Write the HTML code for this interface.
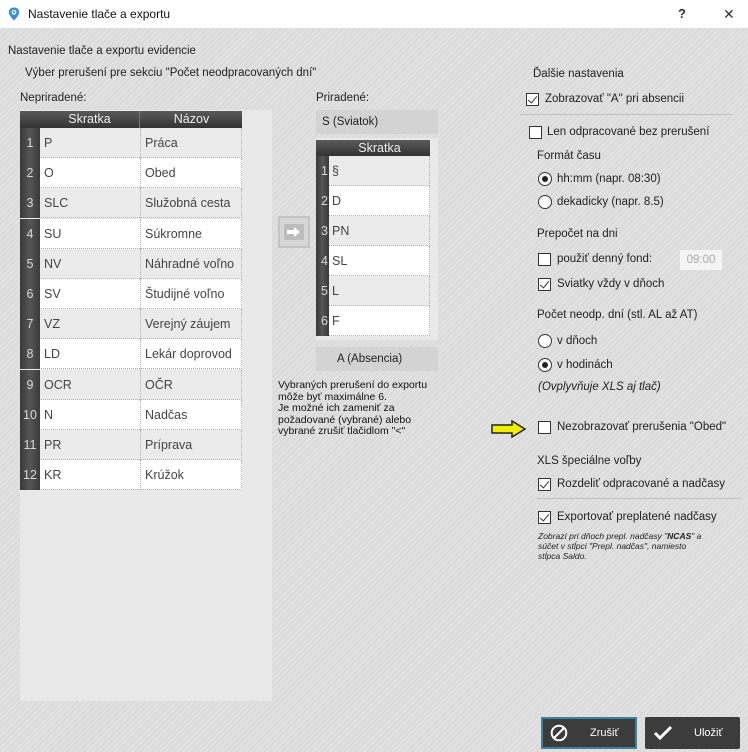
<!DOCTYPE html>
<html><head><meta charset="utf-8"><style>
*{margin:0;padding:0;box-sizing:border-box}
body{width:748px;height:752px;overflow:hidden;position:relative;font-family:"Liberation Sans","DejaVu Sans",sans-serif;font-size:11.5px;color:#222;
background:repeating-linear-gradient(135deg,#e2e2e2 0 2px,#dadada 2px 4px);}
.a{position:absolute;white-space:nowrap}
.title{left:0;top:0;width:748px;height:28px;background:#fff}
.panel{background:#e9e9e9}
.tbl{position:absolute}
.row{position:absolute;left:0;height:30px;border-bottom:1px dotted #b0b0b0;font-size:12.5px;color:#444}
.num{position:absolute;left:0;top:0;height:30px;background:linear-gradient(90deg,#3a3a3a,#555 50%,#3a3a3a);color:#d8d8d8;font-size:12.5px;line-height:30px;text-align:center}
.hdr{position:absolute;background:linear-gradient(#5a5a5a,#333);color:#eee;font-size:12.5px;line-height:16px;text-align:center}
.cb{position:absolute;width:13px;height:13px;border:1px solid #333;background:#fff}
.cb.on::after{content:"";position:absolute;left:3px;top:0px;width:4px;height:8px;border:solid #333;border-width:0 1.5px 1.5px 0;transform:rotate(40deg)}
.rb{position:absolute;width:14px;height:14px;border:1px solid #333;border-radius:50%;background:#fff}
.rb.on::after{content:"";position:absolute;left:3px;top:3px;width:6px;height:6px;border-radius:50%;background:#222}
.box{position:absolute;background:#d3d3d3;font-size:11.5px;line-height:24px;padding-left:6px}
</style></head><body>
<div class="a title"></div>
<svg class="a" style="left:8px;top:7px" width="12" height="14" viewBox="0 0 12 14"><path d="M6 0.5C2.8 0.5 0.8 2.6 0.8 5.3 0.8 8.7 6 13.5 6 13.5S11.2 8.7 11.2 5.3C11.2 2.6 9.2 0.5 6 0.5Z" fill="#3a8fd0"/><circle cx="6" cy="5.3" r="2.4" fill="#fff"/><circle cx="6" cy="5.3" r="1.2" fill="#3a8fd0"/></svg>
<div class="a" style="left:28px;top:7px;font-size:12px;color:#111">Nastavenie tlače a exportu</div>
<div class="a" style="left:678px;top:6px;font-size:13px;font-weight:bold;color:#333">?</div>
<div class="a" style="left:723px;top:6px;font-size:14px;color:#333">✕</div>

<div class="a" style="left:8px;top:45px">Nastavenie tlače a exportu evidencie</div>
<div class="a" style="left:25px;top:67px">Výber prerušení pre sekciu "Počet neodpracovaných dní"</div>
<div class="a" style="left:20px;top:92px">Nepriradené:</div>

<div class="a panel" style="left:20px;top:110px;width:252px;height:591px"></div>
<div class="tbl" style="left:20px;top:111px;width:222px">
<div class="hdr" style="left:0;top:0;width:222px;height:17px"></div>
<div class="hdr" style="left:20px;top:0;width:100px;height:17px;border-right:1px solid #777">Skratka</div>
<div class="hdr" style="left:121px;top:0;width:101px;height:17px">Názov</div>
<div id="lt"></div>
</div>

<div class="a" style="left:316px;top:92px">Priradené:</div>
<div class="box" style="left:316px;top:110px;width:122px">S (Sviatok)</div>
<div class="a panel" style="left:316px;top:138px;width:122px;height:202px"></div>
<div class="tbl" style="left:316px;top:140px;width:114px">
<div class="hdr" style="left:0;top:0;width:114px;height:16px"></div>
<div class="hdr" style="left:13px;top:0;width:101px;height:16px">Skratka</div>
<div id="rt"></div>
</div>
<div class="a" style="left:278px;top:216px;width:32px;height:32px;background:#d6d6d6;border:2px solid #c4c4c4"></div>
<svg class="a" style="left:284px;top:224px" width="20" height="16" viewBox="0 0 20 16"><rect x="0" y="0" width="20" height="16" fill="#bdbdbd"/><path d="M3 6h7V3l6 5-6 5v-3H3z" fill="#fff"/></svg>
<div class="box" style="left:316px;top:347px;width:122px;padding-left:21px">A (Absencia)</div>
<div class="a" style="left:278px;top:380px;font-size:10.5px;line-height:11.5px;color:#111">Vybraných prerušení do exportu<br>môže byť maximálne 6.<br>Je možné ich zameniť za<br>požadované (vybrané) alebo<br>vybrané zrušiť tlačidlom "&lt;"</div>

<div class="a" style="left:533px;top:68px">Ďalšie nastavenia</div>
<div class="cb on" style="left:526px;top:93px"></div><div class="a" style="left:545px;top:93px">Zobrazovať "A" pri absencii</div>
<div class="a" style="left:520px;top:114px;width:212px;height:1px;background:#c0c0c0"></div>
<div class="cb" style="left:529px;top:126px"></div><div class="a" style="left:547px;top:126px">Len odpracované bez prerušení</div>
<div class="a" style="left:537px;top:150px">Formát času</div>
<div class="rb on" style="left:538px;top:172px"></div><div class="a" style="left:557px;top:173px">hh:mm (napr. 08:30)</div>
<div class="rb" style="left:538px;top:195px"></div><div class="a" style="left:557px;top:196px">dekadicky (napr. 8.5)</div>
<div class="a" style="left:537px;top:228px">Prepočet na dni</div>
<div class="cb" style="left:538px;top:253px"></div><div class="a" style="left:557px;top:253px">použiť denný fond:</div>
<div class="a" style="left:680px;top:250px;width:42px;height:20px;background:#f4f4f4;color:#aaa;line-height:20px;text-align:center">09:00</div>
<div class="cb on" style="left:538px;top:278px"></div><div class="a" style="left:557px;top:278px">Sviatky vždy v dňoch</div>
<div class="a" style="left:537px;top:309px">Počet neodp. dní  (stl. AL až AT)</div>
<div class="rb" style="left:538px;top:334px"></div><div class="a" style="left:557px;top:335px">v dňoch</div>
<div class="rb on" style="left:538px;top:358px"></div><div class="a" style="left:557px;top:359px">v hodinách</div>
<div class="a" style="left:538px;top:381px;font-style:italic">(Ovplyvňuje XLS aj tlač)</div>
<svg class="a" style="left:491px;top:420px" width="36" height="18" viewBox="0 0 36 18"><path d="M1 5h20V1l13 8-13 8v-4H1z" fill="#f2ef00" stroke="#222" stroke-width="1.5"/></svg>
<div class="cb" style="left:538px;top:421px"></div><div class="a" style="left:557px;top:421px">Nezobrazovať prerušenia "Obed"</div>
<div class="a" style="left:537px;top:455px">XLS špeciálne voľby</div>
<div class="cb on" style="left:538px;top:478px"></div><div class="a" style="left:557px;top:478px">Rozdeliť odpracované a nadčasy</div>
<div class="a" style="left:537px;top:498px;width:204px;height:1px;background:#c0c0c0"></div>
<div class="cb on" style="left:538px;top:511px"></div><div class="a" style="left:557px;top:511px">Exportovať preplatené nadčasy</div>
<div class="a" style="left:538px;top:531px;font-style:italic;font-size:8.5px;line-height:10px;color:#222">Zobrazí pri dňoch prepl. nadčasy "<b>NCAS</b>" a<br>súčet v stĺpci "Prepl. nadčas", namiesto<br>stĺpca Saldo.</div>

<div class="a" style="left:541px;top:717px;width:96px;height:32px;background:#3c3c3c;border:2px solid #3f7fa0"></div>
<svg class="a" style="left:550px;top:724px" width="18" height="18" viewBox="0 0 18 18"><circle cx="9" cy="9" r="7.3" fill="none" stroke="#fff" stroke-width="2"/><path d="M4 14L14 4" stroke="#fff" stroke-width="2"/></svg>
<div class="a" style="left:590px;top:727px;color:#fff;font-size:11px">Zrušiť</div>
<div class="a" style="left:645px;top:717px;width:95px;height:32px;background:#3c3c3c;border-radius:2px"></div>
<svg class="a" style="left:653px;top:725px" width="20" height="16" viewBox="0 0 20 16"><path d="M2 8l5 5L18 2" fill="none" stroke="#fff" stroke-width="3"/></svg>
<div class="a" style="left:694px;top:727px;color:#fff;font-size:11px">Uložiť</div>

<script>
var L=[["P","Práca"],["O","Obed"],["SLC","Služobná cesta"],["SU","Súkromne"],["NV","Náhradné voľno"],["SV","Študijné voľno"],["VZ","Verejný záujem"],["LD","Lekár doprovod"],["OCR","OČR"],["N","Nadčas"],["PR","Príprava"],["KR","Krúžok"]];
var h="";L.forEach(function(r,i){var y=17+i*30.2;var bg=i%2?"#fff":"#ebebeb";
h+='<div class="row" style="top:'+y+'px;width:222px;background:'+bg+'"><div class="num" style="width:20px">'+(i+1)+'</div><div style="position:absolute;left:24px;top:0;line-height:30px">'+r[0]+'</div><div style="position:absolute;left:120px;top:0;width:1px;height:30px;border-left:1px dotted #b0b0b0"></div><div style="position:absolute;left:125px;top:0;line-height:30px">'+r[1]+'</div><div style="position:absolute;right:0;top:0;height:30px;border-right:1px dotted #b0b0b0"></div></div>';});
document.getElementById("lt").innerHTML=h;
var R=["§","D","PN","SL","L","F"];h="";
R.forEach(function(r,i){var y=16+i*30;var bg=i%2?"#fff":"#ebebeb";
h+='<div class="row" style="top:'+y+'px;width:114px;background:'+bg+'"><div class="num" style="width:13px;text-align:right;padding-right:1px">'+(i+1)+'</div><div style="position:absolute;left:16px;top:0;line-height:30px">'+r+'</div><div style="position:absolute;right:0;top:0;height:30px;border-right:1px dotted #b0b0b0"></div></div>';});
document.getElementById("rt").innerHTML=h;
</script>
</body></html>
